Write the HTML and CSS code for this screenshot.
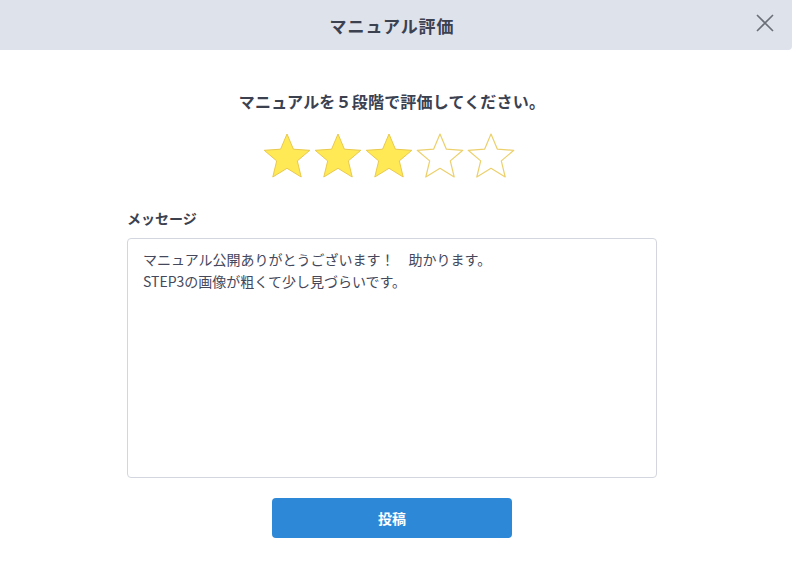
FILE: index.html
```html
<!DOCTYPE html>
<html lang="ja">
<head>
<meta charset="utf-8">
<link rel="stylesheet" href="styles.css">
</head>
<body>
<div class="modal">
  <header class="modal-header">
    <h1 class="modal-title">マニュアル評価</h1>
    <button class="close" aria-label="閉じる">
      <svg width="18" height="18" viewBox="0 0 18 18"><path d="M1 1L17 17M17 1L1 17" stroke="#6b6f78" stroke-width="1.6" fill="none"/></svg>
    </button>
  </header>
  <main class="modal-body">
    <p class="prompt">マニュアルを５段階で評価してください。</p>
    <div class="stars">
      <svg class="star" viewBox="0 0 48 46"><polygon class="on" points="24,1 30.4,16.2 46.8,17.3 34.3,27.9 38.2,44 24,35.3 9.8,44 13.7,27.9 1.2,17.3 17.6,16.2"/></svg>
      <svg class="star" viewBox="0 0 48 46"><polygon class="on" points="24,1 30.4,16.2 46.8,17.3 34.3,27.9 38.2,44 24,35.3 9.8,44 13.7,27.9 1.2,17.3 17.6,16.2"/></svg>
      <svg class="star" viewBox="0 0 48 46"><polygon class="on" points="24,1 30.4,16.2 46.8,17.3 34.3,27.9 38.2,44 24,35.3 9.8,44 13.7,27.9 1.2,17.3 17.6,16.2"/></svg>
      <svg class="star" viewBox="0 0 48 46"><polygon class="off" points="24,1 30.4,16.2 46.8,17.3 34.3,27.9 38.2,44 24,35.3 9.8,44 13.7,27.9 1.2,17.3 17.6,16.2"/></svg>
      <svg class="star" viewBox="0 0 48 46"><polygon class="off" points="24,1 30.4,16.2 46.8,17.3 34.3,27.9 38.2,44 24,35.3 9.8,44 13.7,27.9 1.2,17.3 17.6,16.2"/></svg>
    </div>
    <div class="field">
      <label class="label">メッセージ</label>
      <div class="textarea">マニュアル公開ありがとうございます！　助かります。<br>STEP3の画像が粗くて少し見づらいです。</div>
    </div>
    <button class="submit">投稿</button>
  </main>
</div>
</body>
</html>
```
FILE: styles.css
```css
* { box-sizing: border-box; }
html, body { margin: 0; padding: 0; background: #fff; }
body {
  font-family: "Noto Sans CJK JP", "Noto Sans", sans-serif;
  color: #3c4150;
  width: 792px;
  height: 567px;
  overflow: hidden;
}
.modal-header {
  height: 50px;
  background: #dee2ea;
  border-radius: 0 0 4px 0;
  display: flex;
  align-items: center;
  justify-content: center;
  padding-right: 8px;
  position: relative;
}
.modal-title {
  margin: 0;
  font-size: 17px;
  font-weight: bold;
  color: #3c4150;
  letter-spacing: 0.9px;
}
.close {
  position: absolute;
  right: 18px;
  top: 14px;
  padding: 0;
  border: 0;
  background: none;
  width: 18px;
  height: 18px;
  display: block;
}
.close svg { display: block; }
.modal-body {
  display: flex;
  flex-direction: column;
  align-items: center;
  padding-top: 40px;
  padding-right: 8px;
}
.prompt {
  margin: 0;
  font-size: 16px;
  font-weight: bold;
  line-height: 22px;
  color: #3c4150;
  letter-spacing: 0.2px;
}
.stars {
  display: flex;
  gap: 3px;
  margin-top: 21px;
  margin-right: 7px;
}
.star { width: 48px; height: 46px; display: block; }
.star .on { fill: #ffea55; stroke: #e9c94e; stroke-width: 1; stroke-linejoin: round; }
.star .off { fill: #fff; stroke: #ecd06c; stroke-width: 1.2; stroke-linejoin: round; }
.field {
  width: 530px;
  margin-top: 29px;
  display: flex;
  flex-direction: column;
}
.label {
  font-size: 14px;
  font-weight: bold;
  line-height: 20px;
  color: #3c4150;
}
.textarea {
  margin-top: 10px;
  height: 240px;
  border: 1px solid #d3d6de;
  border-radius: 4px;
  padding: 9px 15px;
  font-size: 14px;
  line-height: 22px;
  color: #44485a;
}
.submit {
  margin-top: 20px;
  width: 240px;
  height: 40px;
  border: 0;
  border-radius: 4px;
  background: #2e88d8;
  color: #fff;
  font-family: inherit;
  font-size: 14px;
  font-weight: bold;
}
```
